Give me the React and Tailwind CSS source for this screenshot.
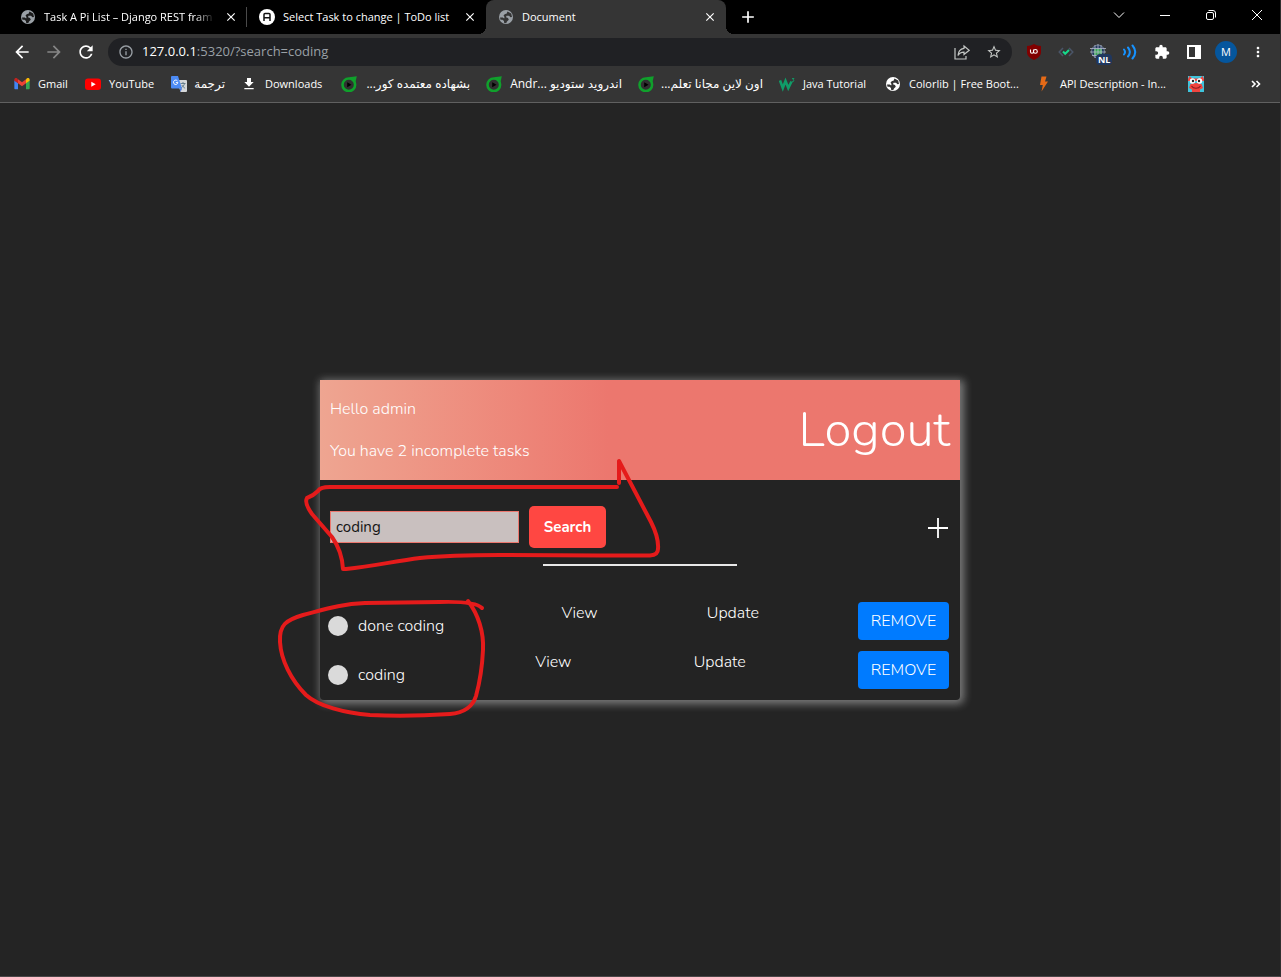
import React from "react";
import {
  MdArrowBack,
  MdArrowForward,
  MdRefresh,
  MdInfoOutline,
  MdExtension,
  MdMoreVert,
  MdStarBorder,
  MdDownload,
  MdClose,
  MdAdd,
} from "react-icons/md";

const GlobeIcon = ({ fill, land }) => (
  <svg viewBox="0 0 16 16" className="h-4 w-4 shrink-0">
    <circle cx="8" cy="8" r="7" fill={fill} />
    <path
      d="M9.500 2.500 13.200 4.500 14 8 12.500 8.200 11 6.800H8.500L8 8.200 10 9 10.800 10.800 9 12.500 8.200 14.200 6 13.700V12L4.500 10.800H2.500L2 8.500H4.800L6.200 9.500 6.500 8 5.500 6.500 7 5 8.500 4.800z"
      fill={land}
    />
  </svg>
);

const GmailIcon = () => (
  <svg viewBox="0 0 24 24" className="h-4 w-4">
    <path fill="#4285f4" d="M2 20h4V10.500L.5 6.500V18.500C.5 19.300 1.200 20 2 20z" />
    <path fill="#34a853" d="M18 20h4c.8 0 1.500-.7 1.500-1.500V6.500L18 10.500z" />
    <path fill="#fbbc04" d="M18 5v6l5.500-4V5.500c0-2.300-2.400-3.200-4-2z" />
    <path fill="#ea4335" d="M6 11V4.800l6 4.500 6-4.500V11l-6 4.500z" />
    <path fill="#c5221f" d="M.5 5.500V7L6 11V4.800L4.500 3.500c-1.600-1.200-4-.3-4 2z" />
  </svg>
);

const YouTubeIcon = () => (
  <svg viewBox="0 0 16 16" className="h-4 w-4">
    <rect y="2.500" width="16" height="11.500" rx="3" fill="#f00" />
    <path d="M6.300 5.700v5l4.400-2.500z" fill="#fff" />
  </svg>
);

const TranslateIcon = () => (
  <svg viewBox="0 0 16 16" className="h-4 w-4">
    <path d="M6 4h9a1 1 0 0 1 1 1v10a1 1 0 0 1-1 1H9.500z" fill="#d6d8da" />
    <path d="M9.500 7.500h5M12 6v1.500M13.500 7.500c-.4 2-1.800 3.600-3.500 4.500M10.800 9c.8 1.500 2 2.600 3.300 3.300" stroke="#607988" fill="none" strokeWidth=".9" />
    <path d="M1 0h6l4 12.500H1a1 1 0 0 1-1-1V1a1 1 0 0 1 1-1z" fill="#4c8bf5" />
    <path d="M9 12.500h2L9.500 16z" fill="#3367d6" />
    <path d="M6.500 5A2.200 2.200 0 1 0 6.900 6.600H4.800" stroke="#fff" fill="none" strokeWidth="1" />
  </svg>
);

const GreenRingIcon = () => (
  <svg viewBox="0 0 16 16" className="h-4 w-4">
    <path d="M8 1.200 15.800.2 14.500 6z" fill="#10a02c" />
    <circle cx="7.800" cy="8.800" r="6.300" fill="#303030" stroke="#10a02c" strokeWidth="2.600" />
    <path d="M6.200 6.300v5L10.500 8.800z" fill="#000" />
  </svg>
);

const WIcon = () => (
  <svg viewBox="0 0 16 16" className="h-4 w-4" fill="none" stroke="#109d68">
    <path d="M1 4.500 3.800 12 6.500 5l2.800 7L12.500 5.500" strokeWidth="2.600" />
    <path d="M13 2.500h2L13.900 4c1.500 0 1.400 2-.9 1.600" strokeWidth=".9" />
  </svg>
);

const BoltIcon = () => (
  <svg viewBox="0 0 16 16" className="h-4 w-4">
    <path d="M5.500.5h5L9 5.500h3L5.500 15.500 6.800 9H4z" fill="#e56a17" />
  </svg>
);

const FaceIcon = () => (
  <svg viewBox="0 0 16 16" className="h-4 w-4">
    <rect width="16" height="16" fill="#3fc4dc" />
    <path d="M1.500 0 4 2.500h8L14.500 0 16 3v2H0V3zM2.500 8l5.500-1 5.500 1L15 12l-3 1.500V16H4v-2.500L1 12z" fill="#f0453f" />
    <circle cx="4.500" cy="5" r="2.700" fill="#fff" />
    <circle cx="11.500" cy="5" r="2.700" fill="#fff" />
    <circle cx="5" cy="5" r="1.200" fill="#222" />
    <circle cx="11" cy="5" r="1.200" fill="#222" />
    <path d="M3.500 10c2 3 7 3 9 0" stroke="#8b1c20" strokeWidth="1.200" fill="none" />
  </svg>
);

const bookmarks = [
  { label: "Gmail", icon: <GmailIcon />, width: "w-[31px]" },
  { label: "YouTube", icon: <YouTubeIcon />, width: "w-[46px]" },
  { label: "ترجمة", icon: <TranslateIcon />, width: "w-[30px]", rtl: true },
  { label: "Downloads", icon: <MdDownload className="h-[18px] w-4 text-white" />, width: "w-[60px]" },
  { label: "بشهاده معتمده كور...", icon: <GreenRingIcon />, width: "w-[105px]", rtl: true },
  { label: "اندرويد ستوديو Andr...\u200e", icon: <GreenRingIcon />, width: "w-28", rtl: true },
  { label: "اون لاين مجانا تعلم...", icon: <GreenRingIcon />, width: "w-[101px]", rtl: true },
  { label: "Java Tutorial", icon: <WIcon />, width: "w-[66px]" },
  { label: "Colorlib | Free Boot...", icon: <GlobeIcon fill="#fff" land="#353535" />, width: "w-[111px]" },
  { label: "API Description - In...", icon: <BoltIcon />, width: "w-28" },
];

function Tab({ title, icon, active, divider, fade }) {
  return (
    <div
      className={
        active
          ? "relative flex h-full w-60 items-center rounded-t-lg bg-[#353535] pr-2 pl-3"
          : "relative flex h-full w-[239px] items-center pr-2 pl-3"
      }
    >
      {active && (
        <>
          <span className="absolute bottom-0 -left-2 h-2 w-2 bg-[radial-gradient(circle_at_0_0,transparent_8px,#353535_8px)]" />
          <span className="absolute -right-2 bottom-0 h-2 w-2 bg-[radial-gradient(circle_at_100%_0,transparent_8px,#353535_8px)]" />
        </>
      )}
      {icon}
      <span
        className={
          fade
            ? "ml-2 flex-1 overflow-hidden whitespace-nowrap [mask-image:linear-gradient(to_right,#000_88%,transparent)]"
            : "ml-2 flex-1 whitespace-nowrap"
        }
      >
        {title}
      </span>
      <button aria-label="Close tab" className="ml-2 flex h-4 w-4 items-center justify-center">
        <MdClose className="h-[14px] w-[14px]" />
      </button>
      {divider && <span className="absolute right-0 h-5 w-px bg-[#4a4a4a]" />}
    </div>
  );
}

function TabStrip() {
  return (
    <div className="flex h-[34px] items-center bg-black pl-2">
      <Tab title="Task A Pi List – Django REST fram" divider fade icon={<GlobeIcon fill="#9aa0a6" land="#1c1c1c" />} />
      <Tab
        title="Select Task to change | ToDo list"
        icon={
          <svg viewBox="0 0 16 16" className="h-4 w-4 shrink-0">
            <circle cx="8" cy="8" r="8" fill="#fff" />
            <path d="M5 12V5.500Q5 4.500 6 4.500h4q1 0 1 1V12M5 8.800h6" stroke="#111" strokeWidth="1.500" fill="none" />
          </svg>
        }
      />
      <Tab title="Document" active icon={<GlobeIcon fill="#9aa0a6" land="#353535" />} />
      <button aria-label="New tab" className="ml-3">
        <MdAdd className="h-5 w-5" />
      </button>
      <div className="mb-1 ml-auto flex w-[184px] shrink-0 items-center">
        <button aria-label="Search tabs" className="flex w-[46px] justify-center">
          <svg viewBox="0 0 12 12" className="h-3 w-3" fill="none" stroke="#fff"><path d="M1 3.500 6 8.500 11 3.500" /></svg>
        </button>
        <button aria-label="Minimize" className="flex w-[46px] justify-center">
          <svg viewBox="0 0 12 12" className="h-3 w-3" fill="none" stroke="#fff"><path d="M1 6.500h10" /></svg>
        </button>
        <button aria-label="Restore" className="flex w-[46px] justify-center">
          <svg viewBox="0 0 12 12" className="h-3 w-3" fill="none" stroke="#fff">
            <rect x="1.500" y="3.500" width="7" height="7" rx="1.500" />
            <path d="M3.500 1.500H8a2.500 2.500 0 0 1 2.500 2.500v4.500" />
          </svg>
        </button>
        <button aria-label="Close" className="flex w-[46px] justify-center">
          <svg viewBox="0 0 12 12" className="h-3 w-3" fill="none" stroke="#fff"><path d="m1 1 10 10M11 1 1 11" /></svg>
        </button>
      </div>
    </div>
  );
}

function Toolbar() {
  return (
    <div className="flex h-9 items-center bg-[#353535] pl-3">
      <button aria-label="Back" className="w-8"><MdArrowBack className="h-5 w-5" /></button>
      <button aria-label="Forward" className="w-8"><MdArrowForward className="h-5 w-5 text-[#868686]" /></button>
      <button aria-label="Reload" className="w-8"><MdRefresh className="h-5 w-5" /></button>
      <div className="flex h-7 flex-1 items-center rounded-full bg-[#202124] px-[10px]">
        <MdInfoOutline className="h-4 w-4 text-[#9aa0a6]" />
        <span className="ml-2 flex-1 text-[13px] text-[#9aa0a6]">
          <span className="text-white">127.0.0.1</span>:5320/?search=coding
        </span>
        <button aria-label="Share" className="mr-4">
          <svg viewBox="0 0 16 16" className="h-4 w-4" fill="none" stroke="#c4c7c5" strokeWidth="1.200">
            <path d="M1 4v11h11v-3" />
            <path d="M10 2l5.200 4.300L10 10.500V8.200C7 8.200 5.200 9.200 4 11.500c.2-3.700 2.300-6.600 6-7.200z" />
          </svg>
        </button>
        <button aria-label="Bookmark this tab"><MdStarBorder className="h-4 w-4 text-[#c4c7c5]" /></button>
      </div>
      <div className="ml-[14px] flex items-center gap-4 pr-[14px]">
        <button aria-label="uBlock">
          <svg viewBox="0 0 16 16" className="h-4 w-4">
            <path d="M8 0c2 1.300 4.500 2 7 2v6c0 4-3 6.300-7 8-4-1.700-7-4-7-8V2c2.500 0 5-.7 7-2z" fill="#800000" />
            <path d="M4.500 5.500v2.300q0 1.500 1.500 1.500t1.500-1.500V5.500M7.500 7.400a1.900 1.900 0 1 0 3.800 0 1.900 1.900 0 1 0-3.800 0" fill="none" stroke="#fff" strokeWidth="1.100" />
          </svg>
        </button>
        <button aria-label="Code check">
          <svg viewBox="0 0 16 16" className="h-4 w-4" fill="none">
            <path d="M5 4 1.200 8 5 12M11 4l3.800 4L11 12" stroke="#4a5568" strokeWidth="1.500" />
            <path d="m5 7.500 2.200 2.300L11 6" stroke="#16d98b" strokeWidth="2" />
          </svg>
        </button>
        <button aria-label="Location" className="relative">
          <svg viewBox="0 0 16 16" className="h-4 w-4" fill="none">
            <circle cx="8" cy="7.500" r="6.500" fill="#24385e" stroke="#7f8ba5" strokeWidth=".8" />
            <path d="M4 5h8v6H4z" fill="#3aa655" />
            <path d="M8 0v15M5 1v13M11 1v13M0 4.500h16M0 8h16M2 11.500h12" stroke="#b4bccb" strokeWidth=".8" />
          </svg>
          <span className="absolute top-[10px] left-[6px] rounded-sm bg-[#20375e] px-[2px] text-[9px] leading-[11px] font-bold">NL</span>
        </button>
        <button aria-label="Audio">
          <svg viewBox="0 0 16 16" className="h-4 w-4" fill="none" stroke="#1692ff" strokeWidth="2" strokeLinecap="round">
            <path d="M2 5.500q2 2.500 0 5M6 3.500q3.700 4.500 0 9M10.500 1.500q5.500 6.500 0 13" />
          </svg>
        </button>
        <button aria-label="Extensions"><MdExtension className="h-4 w-4" /></button>
        <button aria-label="Side panel">
          <svg viewBox="0 0 16 16" className="h-4 w-4"><path d="M1 1h14v14H1zM3 3v10h6V3z" fill="#fff" fillRule="evenodd" /></svg>
        </button>
        <button aria-label="Profile" className="-mx-[3px] flex h-[22px] w-[22px] items-center justify-center rounded-full bg-[#05569d]">M</button>
        <button aria-label="Menu"><MdMoreVert className="h-5 w-4" /></button>
      </div>
    </div>
  );
}

function Bookmarks() {
  return (
    <nav className="flex h-[33px] items-center gap-4 border-b border-[#606060] bg-[#353535] pr-4 pb-1 pl-[14px]">
      {bookmarks.map((b) => (
        <a key={b.label} href="#" className="flex items-center gap-2 whitespace-nowrap">
          <span className="w-4 shrink-0">{b.icon}</span>
          <span className={b.width}>
            <span dir={b.rtl ? "rtl" : "ltr"} className={b.rtl ? "block text-xs" : "block"}>{b.label}</span>
          </span>
        </a>
      ))}
      <a href="#" aria-label="Bookmark"><FaceIcon /></a>
      <button aria-label="More bookmarks" className="ml-auto">
        <svg viewBox="0 0 16 16" className="h-4 w-4" fill="none" stroke="#fff" strokeWidth="1.600"><path d="m4 5 3 3-3 3M8.500 5l3 3-3 3" /></svg>
      </button>
    </nav>
  );
}

function TaskRow({ name }) {
  return (
    <li className="flex h-[49px] items-start justify-between leading-[22px]">
      <a href="#" className="mt-[13px] flex items-center gap-[10px] pr-[18px]">
        <span className="h-5 w-5 rounded-full bg-[#dadada]" />
        {name}
      </a>
      <a href="#" className="pr-[10px]">View</a>
      <a href="#">Update</a>
      <button className="h-[38px] w-[91px] rounded-[4px] bg-[#007bff]">REMOVE</button>
    </li>
  );
}

function Annotations() {
  return (
    <svg
      viewBox="270 450 420 280"
      className="pointer-events-none absolute top-[70px] -left-[50px] h-[280px] w-[420px]"
      fill="none"
      stroke="#e51b1b"
      strokeWidth="4"
      strokeLinecap="round"
      strokeLinejoin="round"
    >
      <path d="M617 487H330Q320 487 318 491Q313 496 307 498Q304 503 312 514L332 537Q342 551 343 569L346 569C375 566 395 561 420 558Q450 555 500 555L600 555.500H650Q658 555 658 549Q659 538 651 522L619 461V483" />
      <path d="M468 601C478 614 484 632 483 650C482 672 479 685 476 696C472 709 462 713 450 714C420 716 390 716 370 715C345 713 318 706 306 695C291 680 281 660 280 642C279 625 286 620 303 615C326 609 341 604 365 603L440 602Q475 601 482 608" />
    </svg>
  );
}

function TodoCard() {
  return (
    <section className="relative w-[640px] rounded-b-[4px] bg-[#232323] font-['Nunito',Lato,sans-serif] text-base leading-6 font-light shadow-[2px_2px_8px_2px_rgba(255,255,255,0.4)]">
      <header className="flex h-[100px] items-center justify-between bg-linear-to-r from-[#eea591] to-[#ec776e] to-45% px-[10px]">
        <div className="flex flex-col gap-[18px]">
          <h1>Hello admin</h1>
          <p>You have 2 incomplete tasks</p>
        </div>
        <a href="#" className="text-[49px]">Logout</a>
      </header>
      <div className="flex items-center justify-between px-[10px] pt-[26px]">
        <form className="flex items-center gap-[10px]" onSubmit={(e) => e.preventDefault()}>
          <input
            aria-label="Search tasks"
            defaultValue="coding"
            className="h-8 w-[189px] border border-[#ec776e] bg-[#c9c0bf] px-[5px] text-[15px] font-normal text-[#151515]"
          />
          <button className="h-[42px] w-[77px] rounded-[5px] bg-[#ff4742] text-[15px] font-bold">Search</button>
        </form>
        <a href="#" aria-label="Add task" className="pt-[2px] pr-[2px]">
          <svg viewBox="0 0 20 20" className="h-5 w-5" stroke="#fff" strokeWidth="1.800"><path d="M0 10h20M10 0v20" /></svg>
        </a>
      </div>
      <hr className="mx-auto mt-4 h-[2px] w-[194px] border-0 bg-[#e8e8e8]" />
      <ul className="pt-9 pr-[11px] pl-2">
        <TaskRow name="done coding" />
        <TaskRow name="coding" />
      </ul>
      <Annotations />
    </section>
  );
}

export default function App() {
  return (
    <div className="flex min-h-screen flex-col border-r border-b border-r-[#303030] border-b-[#4a4648] bg-[#242424] font-['Open_Sans','DejaVu_Sans',sans-serif] text-[11px] text-white">
      <TabStrip />
      <Toolbar />
      <Bookmarks />
      <main className="flex flex-1 items-center justify-center">
        <TodoCard />
      </main>
    </div>
  );
}
